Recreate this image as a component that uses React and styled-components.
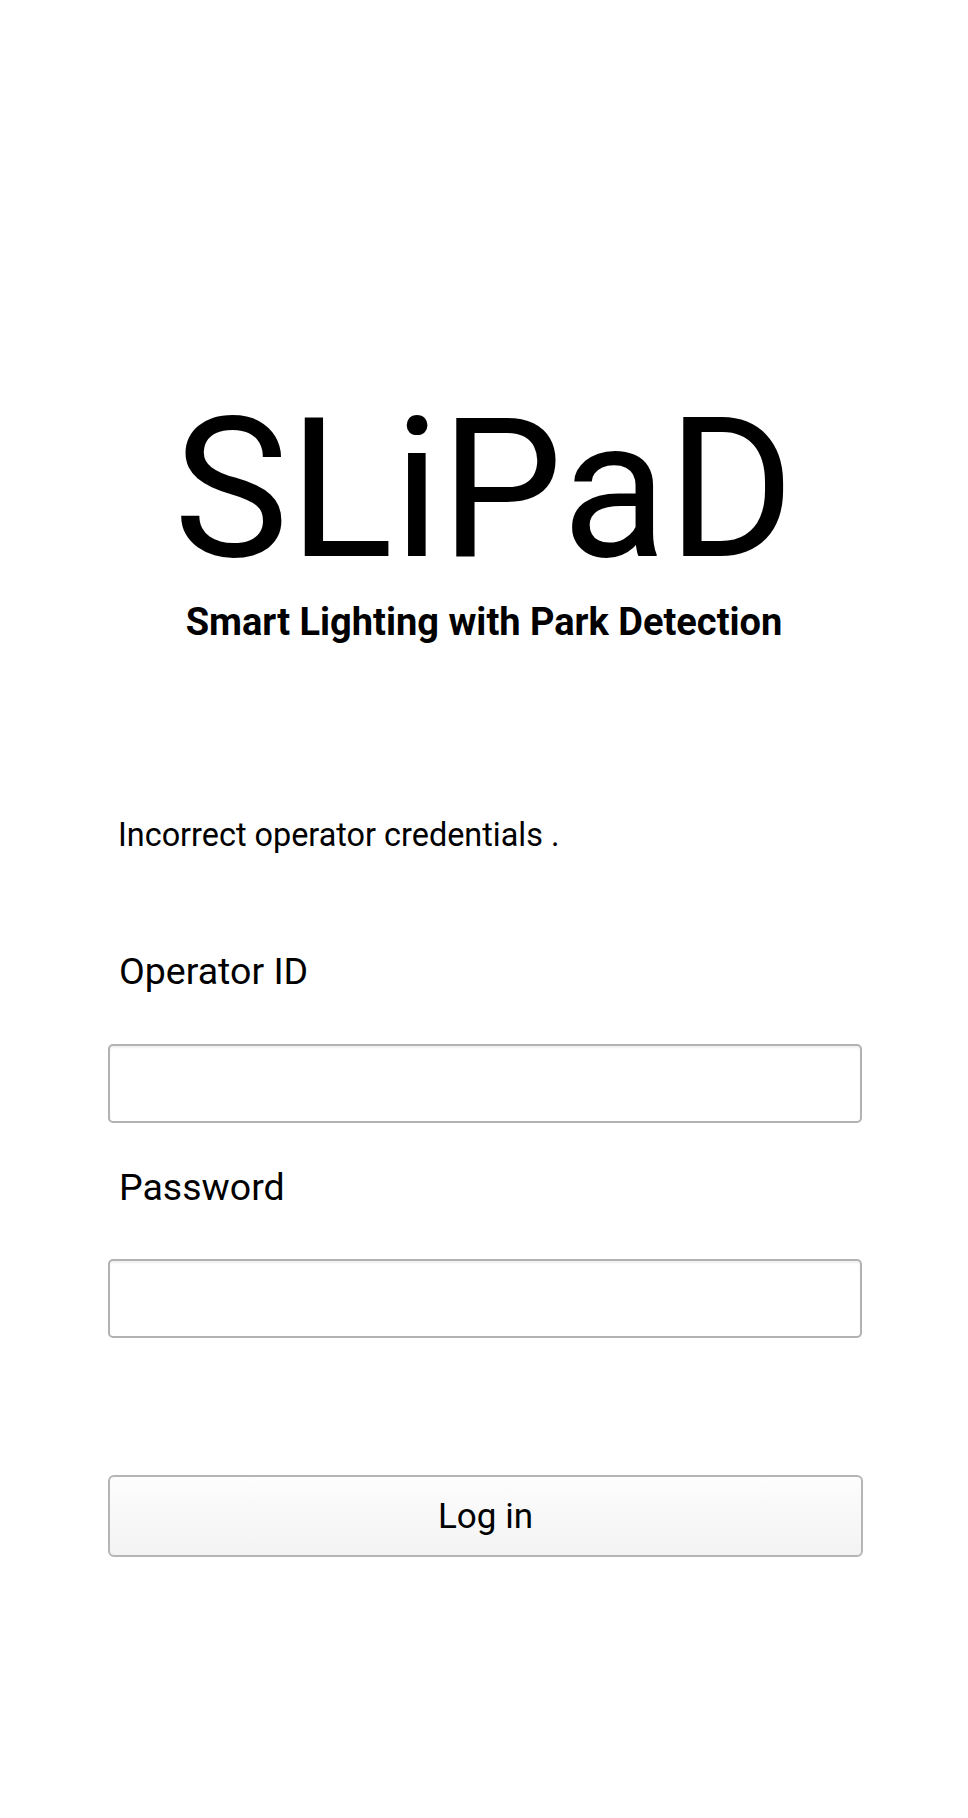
import React from "react";
import styled, { createGlobalStyle } from "styled-components";

const Global = createGlobalStyle`
  html, body { margin: 0; padding: 0; background: #ffffff; }
  body { font-family: Roboto, "Noto Sans", "Liberation Sans", sans-serif; color: #000; }
  * { box-sizing: border-box; }
`;

const Page = styled.div`
  display: flex;
  flex-direction: column;
  min-height: 1818px;
  padding-top: 394px;
`;

const Header = styled.header`
  display: flex;
  flex-direction: column;
  align-items: center;
`;

const Title = styled.h1`
  margin: 0;
  font-size: 194px;
  line-height: 192px;
  font-weight: 400;
  letter-spacing: 0;
`;

const Subtitle = styled.h2`
  margin: 17px 0 0;
  font-size: 38px;
  line-height: 38px;
  font-weight: 700;
`;

const Form = styled.form`
  display: flex;
  flex-direction: column;
  width: 755px;
  margin-left: 108px;
  margin-top: 178px;
`;

const Message = styled.p`
  margin: 0 0 0 10px;
  font-size: 32.4px;
  line-height: 32px;
`;

const Label = styled.label`
  display: block;
  margin: ${(p) => p.$top}px 0 53px 11px;
  font-size: 37.5px;
  line-height: 37.5px;
`;

const Input = styled.input`
  display: block;
  width: 754px;
  height: 79px;
  border: 2px solid #b2b2b2;
  border-radius: 5px;
  background: #fff;
  box-shadow: inset 0 2px 2px rgba(0, 0, 0, 0.06);
  font: inherit;
  font-size: 32px;
  padding: 0 12px;
  outline: none;
`;

const Button = styled.button`
  margin-top: 137px;
  width: 755px;
  height: 82px;
  border: 2px solid #b5b5b5;
  border-radius: 6px;
  background: linear-gradient(#fdfdfd, #f3f3f3);
  font-family: Roboto, "Noto Sans", "Liberation Sans", sans-serif;
  font-size: 35px;
  color: #000;
  padding: 0;
`;

export default function App() {
  return (
    <>
      <Global />
      <Page>
        <Header>
          <Title>SLiPaD</Title>
          <Subtitle>Smart Lighting with Park Detection</Subtitle>
        </Header>
        <Form onSubmit={(e) => e.preventDefault()}>
          <Message>Incorrect operator credentials .</Message>
          <Label $top={102} htmlFor="opid">Operator ID</Label>
          <Input id="opid" type="text" />
          <Label $top={46} htmlFor="pwd">Password</Label>
          <Input id="pwd" type="password" />
          <Button type="submit">Log in</Button>
        </Form>
      </Page>
    </>
  );
}
